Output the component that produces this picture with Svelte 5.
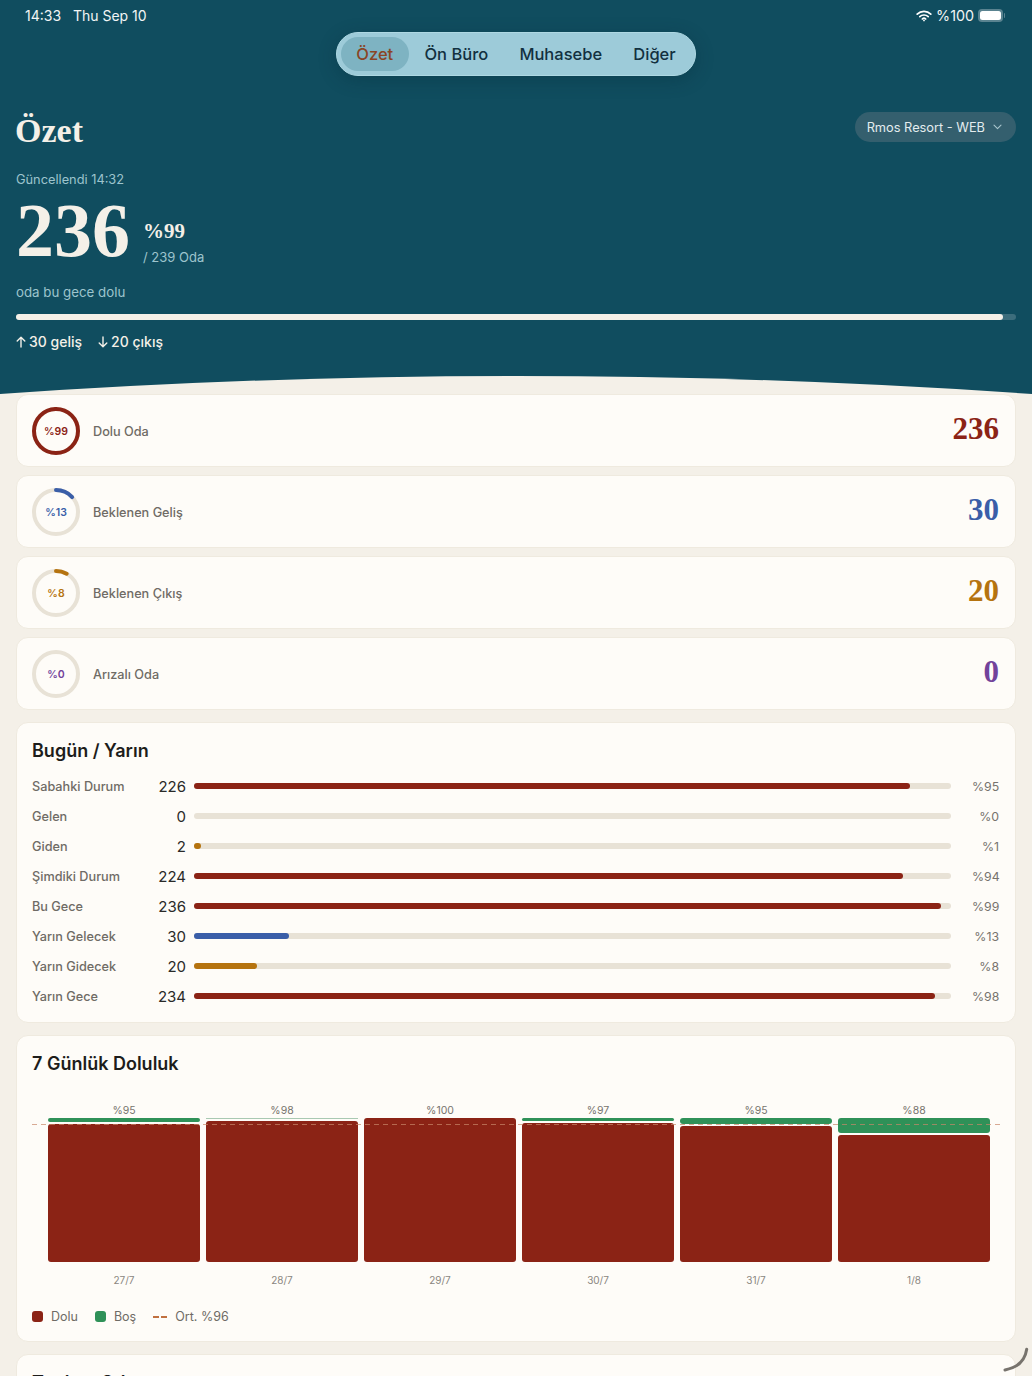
<script>
    const tabs = ["Özet", "Ön Büro", "Muhasebe", "Diğer"];
    const totalRooms = 239;

    const stats = [
        { label: "Dolu Oda", value: 236, pct: 99, color: "#8b2315" },
        { label: "Beklenen Geliş", value: 30, pct: 13, color: "#3a5ea8" },
        { label: "Beklenen Çıkış", value: 20, pct: 8, color: "#b5730f" },
        { label: "Arızalı Oda", value: 0, pct: 0, color: "#72439b" },
    ];

    const rows = [
        { label: "Sabahki Durum", value: 226, pct: 95, color: "#8b2315" },
        { label: "Gelen", value: 0, pct: 0, color: "#3a5ea8" },
        { label: "Giden", value: 2, pct: 1, color: "#b5730f" },
        { label: "Şimdiki Durum", value: 224, pct: 94, color: "#8b2315" },
        { label: "Bu Gece", value: 236, pct: 99, color: "#8b2315" },
        { label: "Yarın Gelecek", value: 30, pct: 13, color: "#3a5ea8" },
        { label: "Yarın Gidecek", value: 20, pct: 8, color: "#b5730f" },
        { label: "Yarın Gece", value: 234, pct: 98, color: "#8b2315" },
    ];

    // heights in px, chart is 144 tall
    const days = [
        { date: "27/7", pct: 95, free: 4, full: 138 },
        { date: "28/7", pct: 98, free: 1, full: 141 },
        { date: "29/7", pct: 100, free: 0, full: 144 },
        { date: "30/7", pct: 97, free: 3, full: 139 },
        { date: "31/7", pct: 95, free: 6, full: 136 },
        { date: "1/8", pct: 88, free: 15, full: 127 },
    ];

    const radius = 22;
    const circ = 2 * Math.PI * radius;
</script>

<main class="page">
    <header class="hero">
        <div class="status">
            <span>14:33&nbsp;&nbsp;&nbsp;Thu Sep 10</span>
            <span class="status-right">
                <svg width="16" height="12" viewBox="0 0 16 12" fill="none" stroke="#fff" stroke-linecap="round">
                    <path d="M1.2 4.2a9.6 9.6 0 0 1 13.6 0" stroke-width="1.7" />
                    <path d="M3.8 6.7a6 6 0 0 1 8.4 0" stroke-width="1.7" />
                    <path d="M6.3 9a2.5 2.5 0 0 1 3.4 0" stroke-width="1.7" />
                    <circle cx="8" cy="10.4" r="0.9" fill="#fff" stroke="none" />
                </svg>
                <span class="battery-text">%100</span>
                <span class="battery"><span class="battery-fill"></span></span>
            </span>
        </div>

        <nav class="tabs-wrap">
            <div class="tabs">
                {#each tabs as tab, i}
                    <span class="tab" class:active={i === 0}>{tab}</span>
                {/each}
            </div>
        </nav>

        <div class="title-row">
            <h1>Özet</h1>
            <div class="hotel">
                <span>Rmos Resort - WEB</span>
                <svg width="9" height="6" viewBox="0 0 9 6" fill="none" stroke="#a9c6cd" stroke-width="1.1" stroke-linecap="round" stroke-linejoin="round">
                    <path d="M1 1.2 4.5 4.6 8 1.2" />
                </svg>
            </div>
        </div>

        <p class="updated">Güncellendi 14:32</p>

        <div class="big-row">
            <span class="big">236</span>
            <div class="big-side">
                <span class="big-pct">%99</span>
                <span class="big-total">/ 239 Oda</span>
            </div>
        </div>

        <p class="tonight">oda bu gece dolu</p>

        <div class="hero-track"><div class="hero-fill" style="width: 98.7%"></div></div>

        <div class="moves">
            <span class="move">
                <svg width="10" height="12" viewBox="0 0 10 12" fill="none" stroke="#f4f0e8" stroke-width="1.4" stroke-linecap="round" stroke-linejoin="round">
                    <path d="M5 11V1.5M1.2 5 5 1.2 8.8 5" />
                </svg>
                30 geliş
            </span>
            <span class="move">
                <svg width="10" height="12" viewBox="0 0 10 12" fill="none" stroke="#f4f0e8" stroke-width="1.4" stroke-linecap="round" stroke-linejoin="round">
                    <path d="M5 1v9.5M1.2 7 5 10.8 8.8 7" />
                </svg>
                20 çıkış
            </span>
        </div>

        <svg class="curve" width="1032" height="18" viewBox="0 0 1032 18" preserveAspectRatio="none">
            <path d="M0 18Q516 -18 1032 18Z" fill="#f4f0e8" />
        </svg>
    </header>

    <section class="content">
        <div class="stats">
            {#each stats as s}
                <div class="card stat">
                    <div class="ring">
                        <svg width="48" height="48" viewBox="0 0 48 48" fill="none">
                            <circle cx="24" cy="24" r={radius} stroke="#e8e2d6" stroke-width="4" />
                            {#if s.pct > 0}
                                <circle
                                    cx="24"
                                    cy="24"
                                    r={radius}
                                    stroke={s.color}
                                    stroke-width="4"
                                    stroke-linecap="round"
                                    stroke-dasharray="{(circ * s.pct) / 100} {circ}"
                                    transform="rotate(-90 24 24)"
                                />
                            {/if}
                        </svg>
                        <span class="ring-text" style="color: {s.color}">%{s.pct}</span>
                    </div>
                    <span class="stat-label">{s.label}</span>
                    <span class="stat-value" style="color: {s.color}">{s.value}</span>
                </div>
            {/each}
        </div>

        <div class="card panel today">
            <h2>Bugün / Yarın</h2>
            <div class="rows">
                {#each rows as r}
                    <div class="row">
                        <span class="row-label">{r.label}</span>
                        <span class="row-value">{r.value}</span>
                        <div class="track">
                            {#if r.value > 0}
                                <div class="fill" style="width: {(r.value / totalRooms) * 100}%; background: {r.color}"></div>
                            {/if}
                        </div>
                        <span class="row-pct">%{r.pct}</span>
                    </div>
                {/each}
            </div>
        </div>

        <div class="card panel week">
            <h2>7 Günlük Doluluk</h2>
            <div class="chart">
                <div class="avg-line"></div>
                {#each days as d}
                    <div class="day">
                        <span class="day-pct">%{d.pct}</span>
                        <div class="stack">
                            {#if d.free > 0}
                                <div class="free" class:hair={d.free < 2} style="height: {d.free}px"></div>
                            {/if}
                            <div class="full" style="height: {d.full}px"></div>
                        </div>
                        <span class="day-date">{d.date}</span>
                    </div>
                {/each}
            </div>
            <div class="legend">
                <span class="key"><i class="dot red"></i>Dolu</span>
                <span class="key"><i class="dot green"></i>Boş</span>
                <span class="key"><i class="dash"></i>Ort. %96</span>
            </div>
        </div>

        <div class="card panel next">
            <h2>Toplam Oda</h2>
        </div>
    </section>

    <svg class="corner" width="30" height="30" viewBox="0 0 30 30" fill="none">
        <path d="M25.7 6.3Q23.2 23.4 4 27" stroke="#77736d" stroke-width="3" stroke-linecap="round" />
    </svg>
</main>

<style>
    :global(body) {
        margin: 0;
        background: #f4f0e8;
    }

    .page {
        position: relative;
        width: 1032px;
        height: 1376px;
        overflow: hidden;
        background: #f4f0e8;
        font-family: Inter, "Liberation Sans", sans-serif;
        color: #1d1d1b;
    }

    .hero {
        position: relative;
        height: 394px;
        box-sizing: border-box;
        padding: 0 16px;
        background: #104d5f;
        color: #f4f0e8;
    }

    .status {
        display: flex;
        justify-content: space-between;
        align-items: center;
        height: 31px;
        padding: 0 10px 0 9px;
        font-size: 14px;
        color: #f2f5f5;
    }

    .status-right {
        display: flex;
        align-items: center;
        gap: 4px;
    }

    .battery-text {
        font-size: 14.3px;
    }

    .battery {
        position: relative;
        display: flex;
        width: 25px;
        height: 13px;
        margin-right: 3px;
        box-sizing: border-box;
        padding: 2px;
        border-radius: 4px;
        background: #5a8390;
    }

    .battery::after {
        content: "";
        position: absolute;
        right: -2px;
        top: 4px;
        width: 1.5px;
        height: 5px;
        border-radius: 0 1px 1px 0;
        background: #5a8390;
    }

    .battery-fill {
        flex: 1;
        border-radius: 2.5px;
        background: #fff;
    }

    .tabs-wrap {
        display: flex;
        justify-content: center;
        margin-top: 1px;
    }

    .tabs {
        display: flex;
        height: 44px;
        box-sizing: border-box;
        padding: 4px;
        border: 1px solid #aed8e3;
        border-radius: 22px;
        background: #9dcbd9;
        box-shadow: 0 4px 18px rgba(6, 40, 52, 0.3);
    }

    .tab {
        display: flex;
        align-items: center;
        padding: 0 15.6px;
        border-radius: 17px;
        font-size: 16.5px;
        font-weight: 500;
        color: #12303f;
    }

    .tab.active {
        background: #7eb3c2;
        color: #8a4525;
    }

    .title-row {
        display: flex;
        justify-content: space-between;
        align-items: flex-start;
        margin-top: 35px;
    }

    h1 {
        margin: -1px 0 0 -1px;
        font-family: "Liberation Serif", serif;
        font-size: 34px;
        line-height: 42px;
        font-weight: 700;
    }

    .hotel {
        display: flex;
        align-items: center;
        gap: 8px;
        height: 30px;
        margin-top: 1px;
        padding: 0 14px 0 12px;
        border-radius: 15px;
        background: #345f6e;
        font-size: 12.8px;
        color: #e3ecee;
    }

    .updated {
        margin: 20px 0 0;
        font-size: 12.8px;
        line-height: 16px;
        color: #9dc4cd;
    }

    .big-row {
        display: flex;
        align-items: flex-end;
        gap: 13px;
        margin-top: 6px;
        height: 72px;
    }

    .big {
        font-family: "Liberation Serif", serif;
        font-size: 76px;
        line-height: 72px;
        font-weight: 700;
    }

    .big-side {
        display: flex;
        flex-direction: column;
        gap: 6px;
        padding-bottom: 1px;
    }

    .big-pct {
        font-family: "Liberation Serif", serif;
        font-size: 21px;
        line-height: 24px;
        font-weight: 700;
    }

    .big-total {
        font-size: 13px;
        line-height: 16px;
        color: #9dc4cd;
    }

    .tonight {
        margin: 17px 0 0;
        font-size: 13.3px;
        line-height: 18px;
        color: #9dc4cd;
    }

    .hero-track {
        margin-top: 13px;
        height: 6px;
        border-radius: 3px;
        background: #3c6d7c;
    }

    .hero-fill {
        height: 100%;
        border-radius: 3px;
        background: #f4f0e8;
    }

    .moves {
        display: flex;
        gap: 16px;
        margin-top: 13px;
        font-size: 14px;
        line-height: 18px;
        font-weight: 500;
    }

    .move {
        display: flex;
        align-items: center;
        gap: 3px;
    }

    .curve {
        position: absolute;
        left: 0;
        bottom: 0;
        display: block;
    }

    .content {
        display: flex;
        flex-direction: column;
        gap: 12px;
        padding: 0 16px;
    }

    .card {
        box-sizing: border-box;
        border: 1px solid #efeadf;
        border-radius: 12px;
        background: #fefcf8;
    }

    .stats {
        display: flex;
        flex-direction: column;
        gap: 8px;
    }

    .stat {
        display: flex;
        align-items: center;
        height: 73px;
        padding: 0 16px 0 15px;
    }

    .ring {
        position: relative;
        width: 48px;
        height: 48px;
    }

    .ring svg {
        display: block;
    }

    .ring-text {
        position: absolute;
        inset: 0;
        display: flex;
        align-items: center;
        justify-content: center;
        padding-top: 1px;
        font-size: 10.5px;
        font-weight: 600;
    }

    .stat-label {
        flex: 1;
        margin-left: 13px;
        padding-top: 2px;
        font-size: 12.7px;
        font-weight: 500;
        color: #6f6b65;
    }

    .stat-value {
        font-family: "Liberation Serif", serif;
        font-size: 31px;
        font-weight: 700;
        line-height: 36px;
        margin-top: -3px;
    }

    .panel {
        padding: 0 16px 0 15px;
    }

    h2 {
        margin: 0;
        font-size: 18px;
        line-height: 24px;
        font-weight: 600;
        color: #1d1d1b;
    }

    .today {
        height: 301px;
        padding-top: 16px;
    }

    .rows {
        display: flex;
        flex-direction: column;
        margin-top: 8px;
    }

    .row {
        display: flex;
        align-items: center;
        height: 30px;
    }

    .row-label {
        width: 115px;
        font-size: 12.7px;
        font-weight: 500;
        color: #6f6b65;
    }

    .row-value {
        width: 39px;
        text-align: right;
        font-size: 15px;
        color: #2a2a28;
    }

    .track {
        flex: 1;
        height: 6px;
        margin: 0 21px 0 8px;
        border-radius: 3px;
        background: #e8e2d6;
    }

    .fill {
        min-width: 7px;
        height: 100%;
        border-radius: 3px;
    }

    .row-pct {
        width: 27px;
        text-align: right;
        font-size: 12.3px;
        color: #77736d;
    }

    .week {
        height: 307px;
        padding-top: 16px;
    }

    .chart {
        position: relative;
        display: flex;
        gap: 6px;
        margin-top: 26px;
        padding-left: 16px;
    }

    .avg-line {
        position: absolute;
        left: 0;
        right: -1px;
        top: 22px;
        height: 1px;
        background: repeating-linear-gradient(90deg, rgba(200, 135, 105, 0.7) 0 5px, transparent 5px 9px);
        z-index: 1;
    }

    .day {
        display: flex;
        flex-direction: column;
        align-items: center;
        width: 152px;
        flex: none;
    }

    .day-pct {
        height: 16px;
        font-size: 10.5px;
        line-height: 18px;
        color: #77736d;
    }

    .stack {
        display: flex;
        flex-direction: column;
        gap: 2px;
        width: 100%;
        height: 144px;
        margin-bottom: 10px;
    }

    .free {
        border-radius: 3px;
        background: #2f9158;
    }

    .free.hair {
        background: #a9c9b2;
        border-radius: 0;
    }

    .full {
        border-radius: 3px;
        background: #8b2315;
    }

    .day-date {
        font-size: 10px;
        line-height: 16px;
        color: #8a867f;
    }

    .legend {
        display: flex;
        align-items: center;
        gap: 17px;
        margin-top: 21px;
        font-size: 12.5px;
        color: #6f6b65;
    }

    .key {
        display: flex;
        align-items: center;
        gap: 8px;
    }

    .dot {
        width: 11px;
        height: 11px;
        border-radius: 3px;
    }

    .red {
        background: #8b2315;
    }

    .green {
        background: #2f9158;
    }

    .dash {
        width: 14px;
        height: 2px;
        background: repeating-linear-gradient(90deg, #c0703f 0 6px, transparent 6px 8px);
    }

    .next {
        height: 60px;
        padding-top: 16px;
    }

    .corner {
        position: absolute;
        right: 1px;
        bottom: 3px;
    }
</style>
